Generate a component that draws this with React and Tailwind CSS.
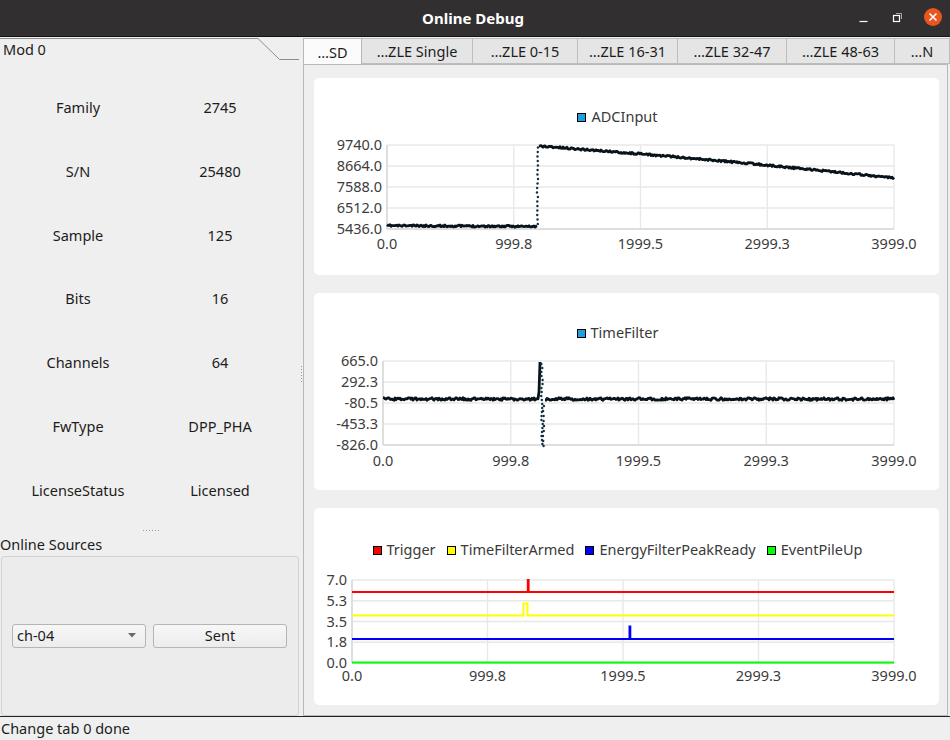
import React from 'react';

const rng = (seed) => {
  let s = seed;
  return () => {
    s = (s * 16807) % 2147483647;
    return s / 2147483647;
  };
};

const toPts = (arr) => arr.map(([x, y]) => `${x.toFixed(1)},${y.toFixed(1)}`).join(' ');

// ADCInput trace, svg coords
const adc = (() => {
  const r = rng(11);
  const pre = [];
  const post = [];
  for (let x = 73; x <= 223; x++) pre.push([x, 99.6 + ((x - 73) / 150) * 0.9 + (r() - 0.5) * 1.8]);
  for (let x = 225; x <= 580; x++) {
    const t = (x - 225) / 355;
    post.push([x, 20 + t * 32 - Math.sin(t * Math.PI) * 1.5 + (r() - 0.5) * 1.8]);
  }
  const dots = [];
  for (let y = 98; y > 21; y -= 4.5) dots.push([223.5 + (r() - 0.5) * 1.2, y]);
  return { lines: [pre, post], dots };
})();

// TimeFilter trace
const tf = (() => {
  const r = rng(23);
  const pre = [];
  const post = [];
  for (let x = 69; x <= 224; x++) pre.push([x, 57 + (r() - 0.5) * 2.6]);
  pre.push([225, 50]);
  pre.push([226, 20]);
  for (let x = 231; x <= 580; x++) post.push([x, 57 + (r() - 0.5) * 2.6]);
  const dots = [];
  for (let y = 22; y < 104; y += 4) dots.push([228 + (r() - 0.5) * 1.6, y]);
  for (let y = 104; y > 60; y -= 5) dots.push([229.5 + (r() - 0.5) * 1.2, y]);
  return { lines: [pre, post], dots };
})();

const charts = [
  {
    legend: [{ name: 'ADCInput', color: '#209fdf' }],
    legendTop: 30,
    plot: { x0: 73, x1: 580, y0: 19, y1: 103 },
    yLabels: ['9740.0', '8664.0', '7588.0', '6512.0', '5436.0'],
    xLabelY: 118,
    trace: adc,
  },
  {
    legend: [{ name: 'TimeFilter', color: '#209fdf' }],
    legendTop: 31,
    plot: { x0: 69, x1: 580, y0: 19, y1: 103 },
    yLabels: ['665.0', '292.3', '-80.5', '-453.3', '-826.0'],
    xLabelY: 119,
    trace: tf,
  },
  {
    legend: [
      { name: 'Trigger', color: '#ff0000' },
      { name: 'TimeFilterArmed', color: '#ffff00' },
      { name: 'EnergyFilterPeakReady', color: '#0000ff' },
      { name: 'EventPileUp', color: '#00ff00' },
    ],
    legendTop: 33,
    plot: { x0: 38, x1: 580, y0: 21, y1: 104 },
    yLabels: ['7.0', '5.3', '3.5', '1.8', '0.0'],
    xLabelY: 117,
    steps: [
      { color: '#ff0000', d: 'M38 33 H213.8 V21 H214.6 V33 H580' },
      { color: '#ffff00', d: 'M38 56.5 H209.5 V44.5 H213.5 V56.5 H580' },
      { color: '#0000ff', d: 'M38 80 H315.5 V67.5 H316.3 V80 H580' },
      { color: '#00ff00', d: 'M38 103.5 H580' },
    ],
  },
];

const xLabels = ['0.0', '999.8', '1999.5', '2999.3', '3999.0'];

const Chart = ({ cfg }) => {
  const { plot, yLabels } = cfg;
  const ys = [0, 1, 2, 3, 4].map((i) => plot.y0 + ((plot.y1 - plot.y0) * i) / 4);
  const xs = [0, 1, 2, 3, 4].map((i) => plot.x0 + ((plot.x1 - plot.x0) * i) / 4);
  return (
    <div className="flex-1 bg-white rounded-[5px] flex flex-col overflow-hidden">
      <div
        style={{ marginTop: cfg.legendTop }}
        className="h-[18px] flex items-center justify-center pr-[18px] gap-[11px] text-[14.5px] text-[#3a3a3a]"
      >
        {cfg.legend.map((l) => (
          <div key={l.name} className="flex items-center gap-[5px]">
            <span className="w-[9px] h-[9px] border border-black" style={{ background: l.color }} />
            <span>{l.name}</span>
          </div>
        ))}
      </div>
      <svg width="625" height="140" className="block shrink-0">
        {ys.map((y, i) => (
          <line key={'h' + i} x1={plot.x0} x2={plot.x1} y1={y} y2={y} stroke="#e8e8e8" strokeWidth="1.6" />
        ))}
        {xs.map((x, i) => (
          <line key={'v' + i} x1={x} x2={x} y1={plot.y0} y2={plot.y1} stroke="#e8e8e8" strokeWidth="1.4" />
        ))}
        <line x1={plot.x0} x2={plot.x1} y1={plot.y1} y2={plot.y1} stroke="#dedede" strokeWidth="2" />
        <line x1={plot.x0} x2={plot.x0} y1={plot.y0} y2={plot.y1} stroke="#dedede" strokeWidth="2" />
        {yLabels.map((t, i) => (
          <text key={t} x={plot.x0 - 5} y={ys[i] + 5} textAnchor="end" fontSize="14.5" fill="#3c3c3c" fontFamily="Noto Sans, sans-serif">
            {t}
          </text>
        ))}
        {xLabels.map((t, i) => (
          <text key={t} x={xs[i]} y={cfg.xLabelY + 5} textAnchor="middle" fontSize="14.5" fill="#3c3c3c" fontFamily="Noto Sans, sans-serif">
            {t}
          </text>
        ))}
        {cfg.trace &&
          cfg.trace.lines.map((l, i) => (
            <polyline key={i} points={toPts(l)} fill="none" stroke="#08141a" strokeWidth="2.8" strokeLinejoin="round" />
          ))}
        {cfg.trace && cfg.trace.dots.map(([x, y], i) => <circle key={i} cx={x} cy={y} r="1.2" fill="#123040" />)}
        {cfg.steps && cfg.steps.map((s) => <path key={s.color} d={s.d} fill="none" stroke={s.color} strokeWidth="2" />)}
      </svg>
    </div>
  );
};

const info = [
  ['Family', '2745'],
  ['S/N', '25480'],
  ['Sample', '125'],
  ['Bits', '16'],
  ['Channels', '64'],
  ['FwType', 'DPP_PHA'],
  ['LicenseStatus', 'Licensed'],
];

const tabs = [
  ['…SD', 59],
  ['…ZLE Single', 111],
  ['…ZLE 0-15', 105],
  ['…ZLE 16-31', 100],
  ['…ZLE 32-47', 109],
  ['…ZLE 48-63', 108],
  ['…N', 55],
];

export default function App() {
  return (
    <div className="w-[950px] h-[740px] flex flex-col bg-[#efefef] text-[14.5px] text-[#1c1c1c] font-['Noto_Sans',sans-serif] overflow-hidden">
      {/* title bar */}
      <div className="h-[37px] shrink-0 bg-[#312f2f] border-b border-[#141414] relative flex items-center justify-center">
        <span className="text-white font-bold text-[15px] ml-[-4px]">Online Debug</span>
        <div className="absolute right-[7px] top-[7px] flex items-center gap-[18px]">
          <svg width="16" height="16" viewBox="0 0 16 16">
            <line x1="4.5" y1="12.5" x2="12.5" y2="12.5" stroke="#fff" strokeWidth="1.2" />
          </svg>
          <svg width="16" height="16" viewBox="0 0 16 16">
            <rect x="4.5" y="6.5" width="6" height="6" fill="none" stroke="#fff" strokeWidth="1.2" />
            <path d="M7 4.5 H12.5 V10" fill="none" stroke="#a8a8a8" strokeWidth="1" />
          </svg>
          <svg width="20" height="20" viewBox="0 0 20 20">
            <circle cx="10" cy="10" r="9" fill="#e9541f" />
            <path d="M6.5 6.5 L13.5 13.5 M13.5 6.5 L6.5 13.5" stroke="#fff" strokeWidth="1.6" />
          </svg>
        </div>
      </div>

      <div className="h-[679px] shrink-0 flex">
        {/* left panel */}
        <div className="w-[300px] shrink-0 flex flex-col">
          <div className="h-[23px] relative flex items-center pl-[3px]">
            <svg className="absolute inset-0" width="300" height="23">
              <path d="M0 1.5 H258 L279.5 22.5 H299" fill="none" stroke="#8e8e8e" strokeWidth="1" />
            </svg>
            <span className="relative mt-[2px]">Mod 0</span>
          </div>
          <div className="pt-[16px] flex flex-col">
            {info.map(([k, v]) => (
              <div key={k} className="h-[63.8px] flex items-center">
                <div className="w-[156px] text-center">{k}</div>
                <div className="w-[128px] text-center">{v}</div>
              </div>
            ))}
          </div>
          <div className="h-[14px] flex items-center justify-center gap-[2px] pt-[2px] pl-[2px]">
            {[0, 1, 2, 3, 4, 5].map((i) => (
              <span key={i} className="w-px h-px bg-[#9a9a9a]" />
            ))}
          </div>
          <div className="h-[17px] flex items-center">Online Sources</div>
          <div className="mt-[2px] ml-px w-[298px] flex-1 bg-[#ececec] border border-[#d3d3d3] rounded-[3px] flex items-center">
            <div className="ml-[10px] w-[134px] h-[24px] rounded-[3px] border border-[#b5b5b5] bg-gradient-to-b from-[#f7f7f7] to-[#ececec] flex items-center justify-between pl-[4px] pr-[9px]">
              <span>ch-04</span>
              <svg width="8" height="5" viewBox="0 0 8 5">
                <path d="M0 0 H8 L4 4.5 Z" fill="#6a6a6a" />
              </svg>
            </div>
            <div className="ml-[7px] w-[134px] h-[24px] rounded-[3px] border border-[#b5b5b5] bg-gradient-to-b from-[#f7f7f7] to-[#ececec] flex items-center justify-center">
              Sent
            </div>
          </div>
        </div>

        {/* splitter */}
        <div className="w-[3px] shrink-0 flex flex-col items-center justify-center gap-[2px] pb-[6px]">
          {[0, 1, 2, 3, 4, 5].map((i) => (
            <span key={i} className="w-px h-px bg-[#9a9a9a]" />
          ))}
        </div>

        {/* right panel */}
        <div className="w-[647px] shrink-0 flex flex-col">
          <div className="h-[27px] flex items-end pt-px overflow-hidden">
            {tabs.map(([t, w], i) => (
              <div
                key={t}
                style={{ width: w }}
                className={
                  i === 0
                    ? 'shrink-0 h-[27px] bg-[#fbfbfb] border border-b-0 border-[#b8b8b8] flex items-center justify-center relative z-10 -mb-px pt-[1px]'
                    : 'shrink-0 h-[26px] bg-[#e5e5e5] border border-l-0 border-[#bdbdbd] flex items-center justify-center pt-[2px]'
                }
              >
                {t}
              </div>
            ))}
          </div>
          <div className="w-[645px] flex-1 border border-[#b8b8b8] bg-[#efefef] pl-[10px] pr-[8px] pt-[13px] pb-[10px] flex flex-col gap-[18px]">
            {charts.map((c, i) => (
              <Chart key={i} cfg={c} />
            ))}
          </div>
        </div>
      </div>

      {/* status bar */}
      <div className="h-[24px] shrink-0 border-t border-[#232323] flex items-center pl-px">Change tab 0 done</div>
    </div>
  );
}
